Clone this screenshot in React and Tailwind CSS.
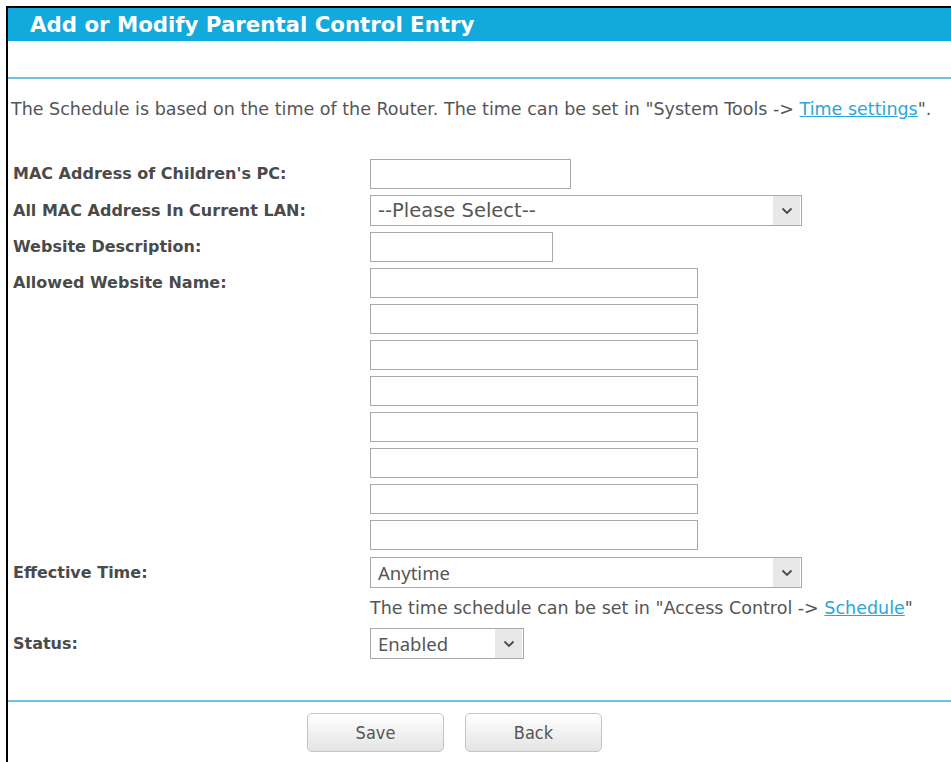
import React from 'react';

const font = { fontFamily: '"DejaVu Sans", Verdana, sans-serif' };
const segoeLike = { fontFamily: '"Noto Sans", "Open Sans", sans-serif', fontSize: '18.5px' };
const verdanaLike = { fontFamily: '"DejaVu Sans", Verdana, sans-serif', fontSize: '19.5px' };

const Chevron = () => (
  <svg width="12" height="8" viewBox="0 0 12 8" fill="none">
    <path d="M1.5 1.5 L6 6 L10.5 1.5" stroke="#4a4a4a" strokeWidth="1.8" />
  </svg>
);

const FakeSelect = ({ value, width, textStyle = segoeLike }) => (
  <div className={`flex h-[31px] items-center border border-[#a9a9a9] bg-white ${width}`}>
    <span className="flex-1 pl-[7px] leading-[24px] text-[#555]" style={textStyle}>{value}</span>
    <span className="mr-[1px] flex h-[29px] w-[27px] items-center justify-center bg-[#e8e8e8]">
      <Chevron />
    </span>
  </div>
);

const TextBox = ({ width }) => (
  <div className={`h-[30px] border border-[#a9a9a9] bg-white ${width}`} />
);

const Row = ({ label, children, className = '' }) => (
  <div className={`flex items-center ${className}`}>
    <div className="w-[362px] pl-[5px] text-[16px] font-bold text-[#4a4a4a]">{label}</div>
    {children}
  </div>
);

export default function App() {
  return (
    <div className="h-[762px] w-[951px] overflow-hidden bg-white pl-[6px] pt-[6px]" style={font}>
      <div className="flex h-full flex-col border-l-2 border-t-2 border-black">
        <div className="flex h-[33px] items-center bg-[#12a9dd] pl-[22px]">
          <span className="text-[21.3px] font-bold text-white">Add or Modify Parental Control Entry</span>
        </div>

        <div className="mt-[36px] h-[2px] bg-[#6ec3e6]" />

        <p className="mt-[18px] pl-[3px] text-[17.5px] leading-[24px] text-[#555]">
          The Schedule is based on the time of the Router. The time can be set in "System Tools -&gt;{' '}
          <span className="text-[#2aa6d8] underline">Time settings</span>".
        </p>

        <div className="mt-[38px] flex flex-col gap-[6px]">
          <Row label="MAC Address of Children's PC:">
            <TextBox width="w-[201px]" />
          </Row>
          <Row label="All MAC Address In Current LAN:">
            <FakeSelect value="--Please Select--" width="w-[432px]" textStyle={verdanaLike} />
          </Row>
          <Row label="Website Description:">
            <TextBox width="w-[183px]" />
          </Row>
          <div className="flex items-start">
            <div className="flex h-[30px] w-[362px] items-center pl-[5px] text-[16px] font-bold text-[#4a4a4a]">
              Allowed Website Name:
            </div>
            <div className="flex flex-col gap-[6px]">
              {[0, 1, 2, 3, 4, 5, 6, 7].map((i) => (
                <TextBox key={i} width="w-[328px]" />
              ))}
            </div>
          </div>
          <Row label="Effective Time:" className="mt-[1px]">
            <FakeSelect value="Anytime" width="w-[432px]" />
          </Row>
          <div className="flex h-[28px] items-center pl-[362px] text-[17.5px] text-[#555]">
            <span>
              The time schedule can be set in "Access Control -&gt;{' '}
              <span className="text-[#2aa6d8] underline">Schedule</span>"
            </span>
          </div>
          <Row label="Status:">
            <FakeSelect value="Enabled" width="w-[154px]" />
          </Row>
        </div>

        <div className="mt-[41px] h-[2px] bg-[#6ec3e6]" />

        <div className="mt-[11px] flex gap-[21px] pl-[299px]">
          {['Save', 'Back'].map((t) => (
            <button
              key={t}
              className="h-[39px] w-[137px] rounded-[5px] border border-[#c4c4c4] bg-gradient-to-b from-white to-[#e4e4e4] text-[18px] text-[#555]"
              style={{ fontFamily: '"DejaVu Sans Condensed", "Liberation Sans Narrow", "DejaVu Sans", sans-serif' }}
            >
              {t}
            </button>
          ))}
        </div>
      </div>
    </div>
  );
}
